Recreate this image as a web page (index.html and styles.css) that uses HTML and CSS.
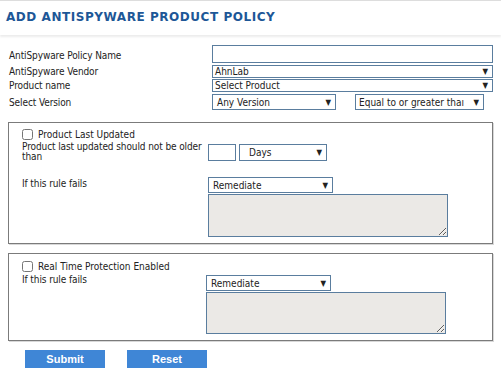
FILE: index.html
```html
<!DOCTYPE html>
<html lang="en">
<head>
  <meta charset="UTF-8">
  <title>Add AntiSpyware Product Policy</title>
  <link rel="stylesheet" href="styles.css">
</head>
<body>

<div class="header">
  <h2>ADD ANTISPYWARE PRODUCT POLICY</h2>
</div>

<form id="policy">
  <div class="rows">
    <label>AntiSpyware Policy Name</label>
    <input type="text" class="field field-name">

    <label>AntiSpyware Vendor</label>
    <div class="select select-wide"><span>AhnLab</span><i>&#9660;</i></div>

    <label class="label-product">Product name</label>
    <div class="select select-wide select-product"><span>Select Product</span><i>&#9660;</i></div>

    <label class="label-version">Select Version</label>
    <div class="pair">
      <div class="select select-version"><span>Any Version</span><i>&#9660;</i></div>
      <div class="select select-cmp"><span>Equal to or greater thaı</span><i>&#9660;</i></div>
    </div>
  </div>

  <div class="box box-first">
    <div class="check"><input type="checkbox"> Product Last Updated</div>
    <div class="line">
      <div class="text text-older">Product last updated should not be older than</div>
      <input type="text" class="field field-days">
      <div class="select select-days"><span>Days</span><i>&#9660;</i></div>
    </div>
    <div class="line line-fail">
      <div class="text">If this rule fails</div>
      <div class="act">
        <div class="select select-act"><span>Remediate</span><i>&#9660;</i></div>
        <textarea class="note"></textarea>
      </div>
    </div>
  </div>

  <div class="box box-second">
    <div class="check"><input type="checkbox"> Real Time Protection Enabled</div>
    <div class="line">
      <div class="text text-fail2">If this rule fails</div>
      <div class="act">
        <div class="select select-act"><span>Remediate</span><i>&#9660;</i></div>
        <textarea class="note"></textarea>
      </div>
    </div>
  </div>

  <div class="buttons">
    <button type="button" class="btn">Submit</button>
    <button type="button" class="btn">Reset</button>
  </div>
</form>

</body>
</html>
```

FILE: styles.css
```css
body {
  margin: 0;
  font-family: 'DejaVu Sans Condensed', 'DejaVu Sans', sans-serif;
  font-size: 10px;
  color: #222;
  background: #fff;
}
.header {
  height: 34px;
  border-top: 1px solid #ddd;
  box-shadow: 0 2px 2px rgba(0,0,0,0.08);
}
h2 {
  margin: 0;
  padding: 9px 0 0 6px;
  font-family: 'DejaVu Sans', sans-serif;
  font-size: 12px;
  font-weight: bold;
  letter-spacing: 0.55px;
  color: #1d5797;
}
.rows {
  display: grid;
  grid-template-columns: 203px 281px;
  padding: 10px 0 0 9px;
  align-items: center;
}
.rows label {
  letter-spacing: -0.1px;
}
.field {
  box-sizing: border-box;
  border: 1px solid #5a7d9e;
  margin: 0;
  padding: 0;
  background: #fff;
}
.field-name {
  height: 18px;
  width: 281px;
  margin-bottom: 2px;
}
.select {
  box-sizing: border-box;
  display: flex;
  justify-content: space-between;
  align-items: center;
  border: 1px solid #5a7d9e;
  padding: 0 4px 0 3px;
  background: #fff;
  color: #222;
}
.select i {
  font-style: normal;
  font-size: 8px;
  color: #222;
}
.select-wide {
  height: 13px;
  width: 281px;
  padding-left: 2px;
}
.label-product,
.select-product {
  margin-top: 1px;
}
.label-version {
  margin-top: 2px;
}
.pair {
  display: flex;
  gap: 19px;
  margin-top: 2px;
}
.select-version {
  height: 16px;
  width: 124px;
  padding-left: 4px;
}
.select-cmp {
  height: 16px;
  width: 129px;
}
.box {
  margin: 12px 8px 0 8px;
  border: 1px solid #7b7b7b;
  box-shadow: 1px 1px 0 #d8d8d8;
  padding: 5px 0 0 13px;
}
.box-first {
  height: 115px;
}
.box-second {
  margin-top: 9px;
  height: 80px;
  padding-top: 6px;
}
.check {
  display: flex;
  align-items: center;
  gap: 5px;
  height: 12px;
}
.check input {
  margin: 0;
  width: 11px;
  height: 11px;
}
.line {
  display: flex;
  align-items: flex-start;
}
.text {
  width: 186px;
  line-height: 10px;
  letter-spacing: -0.1px;
}
.text-older {
  margin-top: 2px;
}
.field-days {
  width: 28px;
  height: 17px;
  margin: 4px 3px 0 0;
}
.select-days {
  width: 88px;
  height: 17px;
  margin-top: 4px;
  padding-left: 9px;
}
.line-fail {
  margin-top: 15px;
}
.line-fail .text {
  margin-top: 2px;
}
.text-fail2 {
  margin-top: 3px;
  width: 184px;
}
.act {
  display: flex;
  flex-direction: column;
  gap: 1px;
}
.select-act {
  width: 125px;
  height: 16px;
  padding-left: 4px;
}
.note {
  box-sizing: border-box;
  width: 240px;
  height: 43px;
  margin: 0;
  border: 1px solid #5a7d9e;
  background: #ebe9e6;
  resize: vertical;
}
.box-second .select-act {
  margin-top: 3px;
}
.box-second .note {
  height: 42px;
}
.buttons {
  display: flex;
  gap: 22px;
  padding: 9px 0 0 25px;
}
.btn {
  width: 80px;
  height: 18px;
  border: none;
  padding: 0;
  background: #3f86d6;
  color: #fff;
  font-family: 'Liberation Sans', Arial, sans-serif;
  font-size: 11px;
  font-weight: bold;
  cursor: pointer;
}
```
